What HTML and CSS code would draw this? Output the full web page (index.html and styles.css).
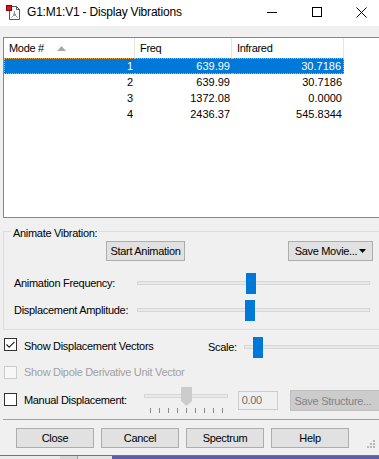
FILE: index.html
```html
<!DOCTYPE html>
<html lang="en">
<head>
  <meta charset="UTF-8">
  <title>G1:M1:V1 - Display Vibrations</title>
  <link rel="stylesheet" href="styles.css">
</head>
<body>
  <div class="window">
    <div class="titlebar">
      <svg class="app-icon" width="14" height="15" viewBox="0 0 14 15">
        <path d="M3.5 1.5 H10.5 L13.5 4.5 V14.5 H3.5 Z" fill="#fff" stroke="#555"/>
        <path d="M10.5 1.5 V4.5 H13.5" fill="none" stroke="#555"/>
        <g stroke="#9a9a9a" fill="#9a9a9a">
          <line x1="8.5" y1="6" x2="8.5" y2="9.5"/>
          <line x1="8.5" y1="9.5" x2="5.5" y2="12.5"/>
          <line x1="8.5" y1="9.5" x2="11.5" y2="12.5"/>
          <circle cx="8.5" cy="9.5" r="1"/>
        </g>
        <rect x="0.5" y="0.5" width="5" height="5" fill="#e51414" stroke="#8a0000"/>
      </svg>
      <span class="title">G1:M1:V1 - Display Vibrations</span>
      <div class="caption">
        <span class="cap">
          <svg width="10" height="10" viewBox="0 0 10 10"><line x1="0" y1="5.5" x2="10" y2="5.5" stroke="#000"/></svg>
        </span>
        <span class="cap">
          <svg width="10" height="10" viewBox="0 0 10 10"><rect x="0.5" y="0.5" width="9" height="9" fill="none" stroke="#000"/></svg>
        </span>
        <span class="cap">
          <svg width="11" height="11" viewBox="0 0 11 11"><path d="M0.5 0.5 L10.5 10.5 M10.5 0.5 L0.5 10.5" stroke="#000"/></svg>
        </span>
      </div>
    </div>

    <div class="client">
      <div class="listview">
        <table class="modes">
          <colgroup><col class="c-mode"><col class="c-freq"><col class="c-ir"></colgroup>
          <thead>
            <tr>
              <th>Mode #<svg class="sort" width="9" height="5" viewBox="0 0 9 5"><path d="M0 5 L4.5 0 L9 5 Z" fill="#a8a8a8"/></svg></th>
              <th>Freq</th>
              <th>Infrared</th>
            </tr>
          </thead>
          <tbody>
            <tr class="selected"><td>1</td><td>639.99</td><td>30.7186</td></tr>
            <tr><td>2</td><td>639.99</td><td>30.7186</td></tr>
            <tr><td>3</td><td>1372.08</td><td>0.0000</td></tr>
            <tr><td>4</td><td>2436.37</td><td>545.8344</td></tr>
          </tbody>
        </table>
      </div>

      <fieldset class="group">
        <legend>Animate Vibration:</legend>
        <div class="anim-buttons">
          <button class="btn start">Start Animation</button>
          <button class="btn movie">Save Movie...<svg class="drop" width="7" height="4" viewBox="0 0 7 4"><path d="M0 0 H7 L3.5 4 Z" fill="#000"/></svg></button>
        </div>
        <div class="slider-row first">
          <span class="slider-label">Animation Frequency:</span>
          <div class="track wide"><span class="thumb" style="left: 108px"></span></div>
        </div>
        <div class="slider-row">
          <span class="slider-label">Displacement Amplitude:</span>
          <div class="track wide"><span class="thumb" style="left: 107px"></span></div>
        </div>
      </fieldset>

      <div class="check-row vectors">
        <span class="check checked">
          <svg width="11" height="11" viewBox="0 0 11 11"><path d="M1.5 5.5 L4.2 8.2 L9.5 2.8" fill="none" stroke="#222" stroke-width="1.1"/></svg>
        </span>
        <span class="check-label vec-label">Show Displacement Vectors</span>
        <span class="scale-label">Scale:</span>
        <div class="track scale"><span class="thumb" style="left: 8px"></span></div>
      </div>

      <div class="check-row dipole">
        <span class="check disabled"></span>
        <span class="check-label muted">Show Dipole Derivative Unit Vector</span>
      </div>

      <div class="check-row manual">
        <span class="check"></span>
        <span class="check-label man-label">Manual Displacement:</span>
        <div class="mini-slider">
          <div class="mini-track"></div>
          <svg class="mini-thumb" width="11" height="19" viewBox="0 0 11 19"><path d="M0 0 H11 V14 L5.5 19 L0 14 Z" fill="#cccccc"/></svg>
          <div class="ticks"><i></i><i></i><i></i><i></i><i></i><i></i><i></i><i></i><i></i></div>
        </div>
        <span class="field">0.00</span>
        <button class="btn save-structure" disabled>Save Structure...</button>
      </div>

      <div class="separator"></div>

      <div class="dialog-buttons">
        <button class="btn wide-btn">Close</button>
        <button class="btn wide-btn">Cancel</button>
        <button class="btn wide-btn">Spectrum</button>
        <button class="btn wide-btn">Help</button>
        <svg class="grip" width="9" height="8" viewBox="0 0 9 8">
          <g fill="#b8b8b8">
            <rect x="6" y="0" width="2" height="2"/>
            <rect x="3" y="3" width="2" height="2"/><rect x="6" y="3" width="2" height="2"/>
            <rect x="0" y="6" width="2" height="2"/><rect x="3" y="6" width="2" height="2"/><rect x="6" y="6" width="2" height="2"/>
          </g>
        </svg>
      </div>
    </div>

    <div class="strip">
      <span class="s1"></span><span class="s2"></span><span class="s3"></span><span class="s4"></span>
    </div>
  </div>
</body>
</html>
```

FILE: styles.css
```css
body {
  margin: 0;
  width: 379px;
  height: 459px;
  overflow: hidden;
  background: #f0f0f0;
  font-family: "Liberation Sans", Arial, sans-serif;
  font-size: 11px;
  letter-spacing: -0.3px;
  color: #000;
}
.window {
  width: 384px;
}

/* title bar */
.titlebar {
  height: 26px;
  background: #fff;
  display: flex;
  align-items: flex-start;
}
.app-icon {
  margin: 5px 0 0 6px;
}
.title {
  margin-left: 7px;
  font-size: 12px;
  line-height: 24px;
  letter-spacing: -0.2px;
}
.caption {
  margin-left: auto;
  display: flex;
}
.cap {
  width: 45px;
  height: 24px;
  display: flex;
  align-items: center;
  justify-content: center;
}

.client {
  padding: 0 3px;
}

/* list */
.listview {
  margin-top: 11px;
  height: 181px;
  box-sizing: border-box;
  border: 1px solid #828790;
  background: #fff;
}
.modes {
  border-collapse: separate;
  border-spacing: 0;
  table-layout: fixed;
  width: 340px;
}
.c-mode { width: 131px; }
.c-freq { width: 97px; }
.c-ir { width: 112px; }
.modes th {
  box-sizing: border-box;
  height: 20px;
  padding: 0 0 0 5px;
  text-align: left;
  font-weight: normal;
  border-right: 1px solid #e5e5e5;
  white-space: nowrap;
}
.sort {
  margin-left: 13px;
  vertical-align: 1px;
}
.modes td {
  box-sizing: border-box;
  padding: 0 2px 0 0;
  line-height: 16px;
  text-align: right;
  letter-spacing: 0;
}
.modes tr.selected td {
  background: #0078d7;
  color: #fff;
  line-height: 14px;
  border-top: 1px dotted #f5a742;
  border-bottom: 1px dotted #f5a742;
}
.modes tr.selected td:first-child {
  border-left: 1px dotted #f5a742;
}
.modes tr.selected td:last-child {
  border-right: 1px dotted #f5a742;
  padding-right: 2px;
}

/* group box */
.group {
  margin: 4px 0 0;
  padding: 1px 0 9px;
  border: 1px solid #dcdcdc;
  min-width: 0;
}
.group legend {
  margin-left: 7px;
  padding: 4px 2px 0;
  line-height: 14px;
}
.anim-buttons {
  display: flex;
}
.btn {
  box-sizing: border-box;
  height: 20px;
  padding: 0;
  border: 1px solid #adadad;
  background: #e1e1e1;
  font: inherit;
  letter-spacing: inherit;
  color: #000;
  display: flex;
  align-items: center;
  justify-content: center;
}
.start {
  margin-left: 102px;
  width: 79px;
}
.movie {
  margin-left: auto;
  margin-right: 7px;
  width: 85px;
}
.drop {
  margin-left: 2px;
}
.slider-row {
  display: flex;
  align-items: center;
  height: 21px;
  margin-top: 6px;
}
.slider-row.first {
  margin-top: 11px;
}
.slider-label {
  box-sizing: border-box;
  width: 133px;
  padding-left: 10px;
}
.track {
  position: relative;
  box-sizing: border-box;
  height: 4px;
  background: #e7eaea;
  border: 1px solid #d6d6d6;
}
.track.wide {
  width: 233px;
}
.thumb {
  position: absolute;
  top: -9px;
  width: 10px;
  height: 21px;
  background: #0078d7;
}

/* checkbox rows */
.check-row {
  display: flex;
  align-items: center;
}
.vectors {
  height: 21px;
  margin-top: 6px;
}
.dipole {
  height: 13px;
  margin-top: 9px;
}
.manual {
  height: 21px;
  margin-top: 11px;
}
.check {
  box-sizing: border-box;
  width: 13px;
  height: 13px;
  margin-left: 1px;
  border: 1px solid #333;
  background: #fff;
  display: flex;
  align-items: center;
  justify-content: center;
}
.vectors .check {
  align-self: flex-start;
  margin-top: 2px;
}
.manual .check {
  align-self: flex-start;
  margin-top: 3px;
}
.check.disabled {
  border-color: #cccccc;
  background: #f7f7f7;
}
.check-label {
  margin-left: 7px;
  line-height: 21px;
}
.vec-label {
  width: 184px;
}
.man-label {
  width: 121px;
}
.muted {
  color: #a0a0a0;
  line-height: 13px;
}
.scale-label {
  width: 36px;
}
.track.scale {
  flex: 1;
  margin-right: -3px;
}

.mini-slider {
  position: relative;
  width: 84px;
  height: 21px;
}
.mini-track {
  margin-top: 4px;
  height: 4px;
  box-sizing: border-box;
  background: #e7eaea;
  border: 1px solid #d6d6d6;
}
.mini-thumb {
  position: absolute;
  left: 37px;
  top: -3px;
}
.ticks {
  position: absolute;
  left: 6px;
  top: 18px;
  display: flex;
  gap: 8px;
}
.ticks i {
  width: 1px;
  height: 5px;
  background: #8a8a8a;
}
.field {
  box-sizing: border-box;
  width: 40px;
  height: 19px;
  margin-left: 10px;
  padding-left: 3px;
  border: 1px solid #cccccc;
  color: #6d6d6d;
  line-height: 17px;
}
.save-structure {
  width: 92px;
  height: 21px;
  margin-left: 12px;
  padding-left: 4px;
  justify-content: flex-start;
  background: #cccccc;
  border-color: #bfbfbf;
  color: #838383;
}

.separator {
  margin-top: 8px;
  height: 1px;
  background: #a0a0a0;
}

.dialog-buttons {
  display: flex;
  align-items: center;
  gap: 7px;
  height: 20px;
  margin-top: 8px;
  padding-left: 13px;
}
.wide-btn {
  width: 78px;
}
.grip {
  margin-left: auto;
  margin-right: 5px;
  align-self: flex-end;
}

/* screen below the dialog */
.strip {
  margin-top: 7px;
  height: 3px;
  border-top: 1px solid #2e86d8;
  display: flex;
}
.strip span {
  height: 3px;
}
.s1 { width: 60px; background: #ebebeb; }
.s2 { width: 17px; background: #d6d6d6; border-right: 1px solid #a0a0a0; }
.s3 { width: 34px; background: #e4e4e4; }
.s4 { flex: 1; background: #5d5fa6; }
```
